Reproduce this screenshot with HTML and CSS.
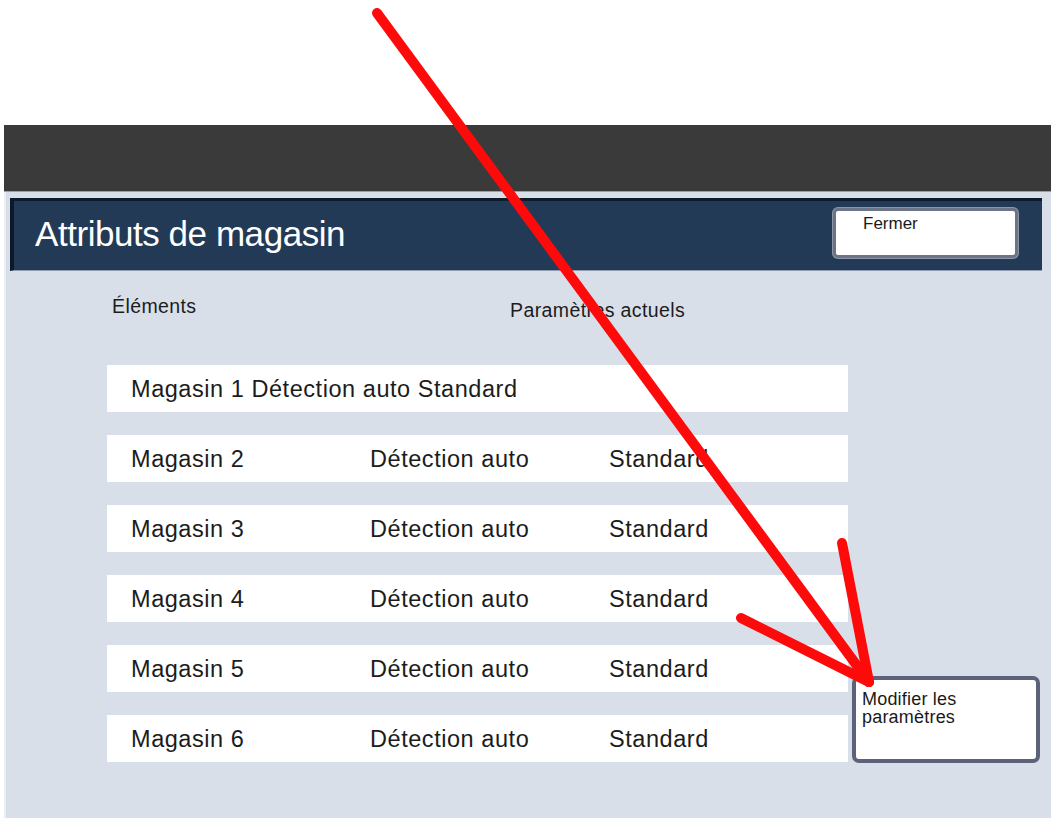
FILE: index.html
```html
<!DOCTYPE html>
<html lang="fr">
<head>
<meta charset="utf-8">
<title>Attributs de magasin</title>
<link rel="stylesheet" href="styles.css">
</head>
<body>
<div class="page">
  <div class="device">
    <div class="statusbar"></div>
    <div class="panel">
      <div class="header">
        <h1 class="title">Attributs de magasin</h1>
        <button class="btn-close">Fermer</button>
      </div>
      <div class="labels">
        <span class="label-items">Éléments</span>
        <span class="label-current">Paramètres actuels</span>
      </div>
      <div class="body">
        <div class="rows">
          <div class="row"><span class="cell-inline">Magasin 1 Détection auto Standard</span></div>
          <div class="row"><span class="cell">Magasin 2</span><span class="cell">Détection auto</span><span class="cell">Standard</span></div>
          <div class="row"><span class="cell">Magasin 3</span><span class="cell">Détection auto</span><span class="cell">Standard</span></div>
          <div class="row"><span class="cell">Magasin 4</span><span class="cell">Détection auto</span><span class="cell">Standard</span></div>
          <div class="row"><span class="cell">Magasin 5</span><span class="cell">Détection auto</span><span class="cell">Standard</span></div>
          <div class="row"><span class="cell">Magasin 6</span><span class="cell">Détection auto</span><span class="cell">Standard</span></div>
        </div>
        <button class="btn-modify">Modifier les paramètres</button>
      </div>
    </div>
  </div>

  <!-- red pointer drawn over the screen -->
  <svg class="pointer" width="1051" height="823" viewBox="0 0 1051 823" aria-hidden="true">
    <g stroke="#ff0a0a" stroke-width="10" stroke-linecap="round" fill="none">
      <line x1="377" y1="13" x2="869" y2="682"/>
      <line x1="842" y1="543" x2="869" y2="682"/>
      <line x1="741" y1="618" x2="869" y2="682"/>
    </g>
  </svg>
</div>
</body>
</html>
```

FILE: styles.css
```css
html, body {
  margin: 0;
  padding: 0;
  background: #ffffff;
}

body {
  font-family: "Liberation Sans", Arial, Helvetica, sans-serif;
  color: #1a1a1a;
}

.page {
  position: relative;
  width: 1051px;
  height: 823px;
  padding-top: 125px;
  box-sizing: border-box;
  overflow: hidden;
}

.device {
  margin-left: 4px;
}

.statusbar {
  height: 67px;
  background: #3a3a3a;
  border-bottom: 1px solid #9aa0a8;
  box-sizing: border-box;
}

.panel {
  height: 626px;
  box-sizing: border-box;
  background: #d9dfe9;
  border-left: 2px solid #e9edf4;
  padding: 6px 9px 0 4px;
}

.header {
  height: 73px;
  box-sizing: border-box;
  background: #233a57;
  border-top: 3px solid #0f1b2b;
  border-left: 4px solid #0d1828;
  border-bottom: 1px solid #8e9bb0;
  display: flex;
  justify-content: space-between;
  align-items: flex-start;
  padding-left: 21px;
}

.title {
  margin: 0;
  font-weight: normal;
  font-size: 35px;
  line-height: 40px;
  color: #ffffff;
  padding-top: 13px;
  letter-spacing: -0.45px;
}

.btn-close {
  margin: 7px 24px 0 0;
  width: 185px;
  height: 50px;
  box-sizing: border-box;
  background: #ffffff;
  border: 3px solid #6c7487;
  border-radius: 5px;
  box-shadow: 0 0 0 1px #8d95a6;
  font-family: inherit;
  font-size: 17px;
  line-height: 20px;
  color: #1a1a1a;
  text-align: left;
  padding: 3px 0 0 27px;
  display: flex;
  align-items: flex-start;
}

.labels {
  display: flex;
  margin-top: 24px;
  height: 26px;
  padding-left: 102px;
  font-size: 19.5px;
  line-height: 22px;
  letter-spacing: 0.4px;
  color: #1c1c1c;
}

.label-items {
  width: 398px;
}

.label-current {
  padding-top: 4px;
}

.body {
  display: flex;
  align-items: flex-end;
  gap: 4px;
  margin-top: 44px;
  padding-left: 97px;
}

.rows {
  width: 741px;
  display: flex;
  flex-direction: column;
  gap: 23px;
}

.row {
  height: 47px;
  background: #ffffff;
  display: flex;
  align-items: center;
  padding-left: 24px;
  font-size: 23.5px;
  line-height: 26px;
  letter-spacing: 0.55px;
  color: #1c1c1c;
}

.cell {
  width: 242px;
  white-space: nowrap;
}

.cell-inline {
  white-space: nowrap;
}

.btn-modify {
  width: 188px;
  height: 87px;
  margin-bottom: -1px;
  box-sizing: border-box;
  background: #ffffff;
  border: 4px solid #5b6279;
  border-radius: 7px;
  font-family: inherit;
  font-size: 18px;
  line-height: 18px;
  letter-spacing: 0.2px;
  color: #1a1a1a;
  text-align: left;
  padding: 10px 0 0 6px;
  display: flex;
  align-items: flex-start;
}

.pointer {
  position: absolute;
  left: 0;
  top: 0;
  pointer-events: none;
}
```
